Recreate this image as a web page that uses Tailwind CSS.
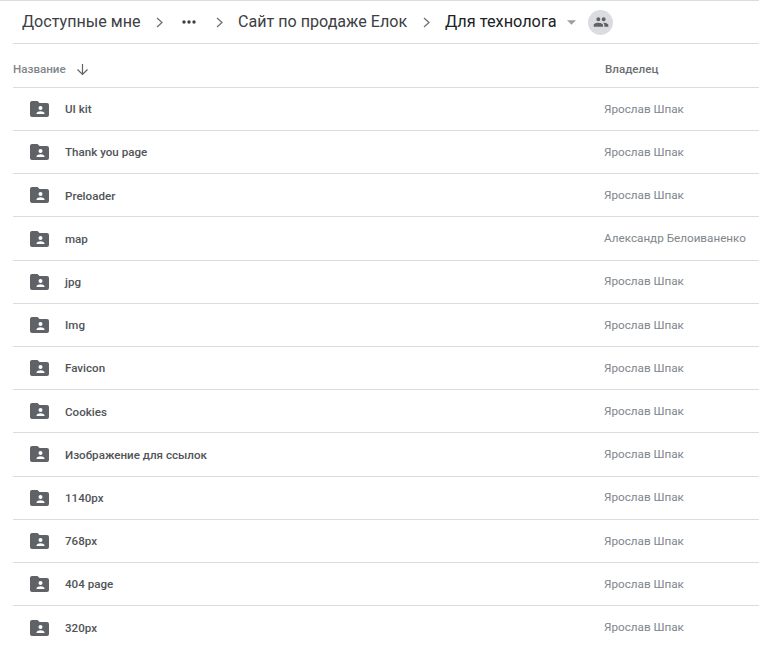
<!DOCTYPE html>
<html>
<head>
<meta charset="utf-8">
<script src="https://cdn.jsdelivr.net/npm/@tailwindcss/browser@4"></script>
</head>
<body class="bg-white overflow-hidden font-['Roboto','Liberation_Sans',sans-serif]">
<div class="w-[759px] h-[645px] overflow-hidden border-t border-[#dadce0]">
  <div class="ml-[13px] h-[42px] border-b border-[#dadce0] flex items-center text-[#5f6368] box-content">
    <span class="ml-[9px] w-[118px] text-[16.100px] text-[#3c4043] whitespace-nowrap">Доступные мне</span>
    <svg class="ml-[16px] w-[7px] h-[11px]" viewBox="0 0 7 11"><path d="M1 1 6 5.500 1 10" fill="none" stroke="#6f7377" stroke-width="1.300"/></svg>
    <svg class="ml-[19px] w-[14px] h-[4px]" viewBox="0 0 14 4"><circle cx="2" cy="2" r="1.700" fill="#3c4043"/><circle cx="7" cy="2" r="1.700" fill="#3c4043"/><circle cx="12" cy="2" r="1.700" fill="#3c4043"/></svg>
    <svg class="ml-[20px] w-[7px] h-[11px]" viewBox="0 0 7 11"><path d="M1 1 6 5.500 1 10" fill="none" stroke="#6f7377" stroke-width="1.300"/></svg>
    <span class="ml-[15px] w-[172px] text-[16.100px] text-[#3c4043] whitespace-nowrap">Сайт по продаже Елок</span>
    <svg class="ml-[13px] w-[7px] h-[11px]" viewBox="0 0 7 11"><path d="M1 1 6 5.500 1 10" fill="none" stroke="#6f7377" stroke-width="1.300"/></svg>
    <span class="ml-[15px] w-[113px] text-[16.300px] text-[#202124] whitespace-nowrap">Для технолога</span>
    <svg class="ml-[9px] w-[9px] h-[5px]" viewBox="0 0 10 5"><path d="M0 0h10L5 5z" fill="#9aa0a6"/></svg>
    <div class="ml-[12px] w-[25px] h-[25px] rounded-full bg-[#dadce0] flex items-center justify-center">
      <svg class="w-[16px] h-[16px]" viewBox="0 0 24 24"><path fill="#5f6368" d="M16 11a3 3 0 1 0 0-6 3 3 0 0 0 0 6zm-8 0a3 3 0 1 0 0-6 3 3 0 0 0 0 6zm0 2c-2.300 0-7 1.200-7 3.500V19h14v-2.500C15 14.200 10.300 13 8 13zm8 0c-.3 0-.6 0-1 .1 1.200.8 2 2 2 3.400V19h6v-2.500c0-2.300-4.700-3.500-7-3.500z"/></svg>
    </div>
  </div>
  <div class="ml-[13px] h-[43.875px] pt-[9px] border-b border-[#dadce0] flex items-center text-[11.600px] font-medium">
    <span class="w-[53px] text-[#80868b] whitespace-nowrap">Название</span>
    <svg class="ml-[10px] w-[13px] h-[13px]" viewBox="0 0 13 13"><path d="M6.500 1v10.500M1.500 6.500l5 5 5-5" fill="none" stroke="#5f6368" stroke-width="1.200"/></svg>
    <span class="ml-[516px] text-[#6b6f73] whitespace-nowrap">Владелец</span>
  </div>
  <div class="ml-[13px]">
    <div class="h-[43.2px] border-b border-[#dadce0] flex items-center">
      <svg class="ml-[17px] w-[19px] h-[16px] shrink-0" viewBox="0 0 19 16"><path fill="#5f6368" d="M2 0h5.500l2 2H17a2 2 0 0 1 2 2v10a2 2 0 0 1-2 2H2a2 2 0 0 1-2-2V2a2 2 0 0 1 2-2z"/><circle cx="10.500" cy="7" r="2" fill="#fff"/><path fill="#fff" d="M6.500 12.500c0-1.500 2.500-2.300 4-2.300s4 .8 4 2.300v.5h-8z"/></svg>
      <span class="ml-[16px] w-[539px] pt-[2px] text-[11.600px] font-medium text-[#505458] whitespace-nowrap">UI kit</span>
      <span class="pt-px text-[11.700px] text-[#80868b] whitespace-nowrap">Ярослав Шпак</span>
    </div>
    <div class="h-[43.2px] border-b border-[#dadce0] flex items-center">
      <svg class="ml-[17px] w-[19px] h-[16px] shrink-0" viewBox="0 0 19 16"><path fill="#5f6368" d="M2 0h5.500l2 2H17a2 2 0 0 1 2 2v10a2 2 0 0 1-2 2H2a2 2 0 0 1-2-2V2a2 2 0 0 1 2-2z"/><circle cx="10.500" cy="7" r="2" fill="#fff"/><path fill="#fff" d="M6.500 12.500c0-1.500 2.500-2.300 4-2.300s4 .8 4 2.300v.5h-8z"/></svg>
      <span class="ml-[16px] w-[539px] pt-[2px] text-[11.600px] font-medium text-[#505458] whitespace-nowrap">Thank you page</span>
      <span class="pt-px text-[11.700px] text-[#80868b] whitespace-nowrap">Ярослав Шпак</span>
    </div>
    <div class="h-[43.2px] border-b border-[#dadce0] flex items-center">
      <svg class="ml-[17px] w-[19px] h-[16px] shrink-0" viewBox="0 0 19 16"><path fill="#5f6368" d="M2 0h5.500l2 2H17a2 2 0 0 1 2 2v10a2 2 0 0 1-2 2H2a2 2 0 0 1-2-2V2a2 2 0 0 1 2-2z"/><circle cx="10.500" cy="7" r="2" fill="#fff"/><path fill="#fff" d="M6.500 12.500c0-1.500 2.500-2.300 4-2.300s4 .8 4 2.300v.5h-8z"/></svg>
      <span class="ml-[16px] w-[539px] pt-[2px] text-[11.600px] font-medium text-[#505458] whitespace-nowrap">Preloader</span>
      <span class="pt-px text-[11.700px] text-[#80868b] whitespace-nowrap">Ярослав Шпак</span>
    </div>
    <div class="h-[43.2px] border-b border-[#dadce0] flex items-center">
      <svg class="ml-[17px] w-[19px] h-[16px] shrink-0" viewBox="0 0 19 16"><path fill="#5f6368" d="M2 0h5.500l2 2H17a2 2 0 0 1 2 2v10a2 2 0 0 1-2 2H2a2 2 0 0 1-2-2V2a2 2 0 0 1 2-2z"/><circle cx="10.500" cy="7" r="2" fill="#fff"/><path fill="#fff" d="M6.500 12.500c0-1.500 2.500-2.300 4-2.300s4 .8 4 2.300v.5h-8z"/></svg>
      <span class="ml-[16px] w-[539px] pt-[2px] text-[11.600px] font-medium text-[#505458] whitespace-nowrap">map</span>
      <span class="pt-px text-[11.700px] text-[#80868b] whitespace-nowrap">Александр Белоиваненко</span>
    </div>
    <div class="h-[43.2px] border-b border-[#dadce0] flex items-center">
      <svg class="ml-[17px] w-[19px] h-[16px] shrink-0" viewBox="0 0 19 16"><path fill="#5f6368" d="M2 0h5.500l2 2H17a2 2 0 0 1 2 2v10a2 2 0 0 1-2 2H2a2 2 0 0 1-2-2V2a2 2 0 0 1 2-2z"/><circle cx="10.500" cy="7" r="2" fill="#fff"/><path fill="#fff" d="M6.500 12.500c0-1.500 2.500-2.300 4-2.300s4 .8 4 2.300v.5h-8z"/></svg>
      <span class="ml-[16px] w-[539px] pt-[2px] text-[11.600px] font-medium text-[#505458] whitespace-nowrap">jpg</span>
      <span class="pt-px text-[11.700px] text-[#80868b] whitespace-nowrap">Ярослав Шпак</span>
    </div>
    <div class="h-[43.2px] border-b border-[#dadce0] flex items-center">
      <svg class="ml-[17px] w-[19px] h-[16px] shrink-0" viewBox="0 0 19 16"><path fill="#5f6368" d="M2 0h5.500l2 2H17a2 2 0 0 1 2 2v10a2 2 0 0 1-2 2H2a2 2 0 0 1-2-2V2a2 2 0 0 1 2-2z"/><circle cx="10.500" cy="7" r="2" fill="#fff"/><path fill="#fff" d="M6.500 12.500c0-1.500 2.500-2.300 4-2.300s4 .8 4 2.300v.5h-8z"/></svg>
      <span class="ml-[16px] w-[539px] pt-[2px] text-[11.600px] font-medium text-[#505458] whitespace-nowrap">Img</span>
      <span class="pt-px text-[11.700px] text-[#80868b] whitespace-nowrap">Ярослав Шпак</span>
    </div>
    <div class="h-[43.2px] border-b border-[#dadce0] flex items-center">
      <svg class="ml-[17px] w-[19px] h-[16px] shrink-0" viewBox="0 0 19 16"><path fill="#5f6368" d="M2 0h5.500l2 2H17a2 2 0 0 1 2 2v10a2 2 0 0 1-2 2H2a2 2 0 0 1-2-2V2a2 2 0 0 1 2-2z"/><circle cx="10.500" cy="7" r="2" fill="#fff"/><path fill="#fff" d="M6.500 12.500c0-1.500 2.500-2.300 4-2.300s4 .8 4 2.300v.5h-8z"/></svg>
      <span class="ml-[16px] w-[539px] pt-[2px] text-[11.600px] font-medium text-[#505458] whitespace-nowrap">Favicon</span>
      <span class="pt-px text-[11.700px] text-[#80868b] whitespace-nowrap">Ярослав Шпак</span>
    </div>
    <div class="h-[43.2px] border-b border-[#dadce0] flex items-center">
      <svg class="ml-[17px] w-[19px] h-[16px] shrink-0" viewBox="0 0 19 16"><path fill="#5f6368" d="M2 0h5.500l2 2H17a2 2 0 0 1 2 2v10a2 2 0 0 1-2 2H2a2 2 0 0 1-2-2V2a2 2 0 0 1 2-2z"/><circle cx="10.500" cy="7" r="2" fill="#fff"/><path fill="#fff" d="M6.500 12.500c0-1.500 2.500-2.300 4-2.300s4 .8 4 2.300v.5h-8z"/></svg>
      <span class="ml-[16px] w-[539px] pt-[2px] text-[11.600px] font-medium text-[#505458] whitespace-nowrap">Cookies</span>
      <span class="pt-px text-[11.700px] text-[#80868b] whitespace-nowrap">Ярослав Шпак</span>
    </div>
    <div class="h-[43.2px] border-b border-[#dadce0] flex items-center">
      <svg class="ml-[17px] w-[19px] h-[16px] shrink-0" viewBox="0 0 19 16"><path fill="#5f6368" d="M2 0h5.500l2 2H17a2 2 0 0 1 2 2v10a2 2 0 0 1-2 2H2a2 2 0 0 1-2-2V2a2 2 0 0 1 2-2z"/><circle cx="10.500" cy="7" r="2" fill="#fff"/><path fill="#fff" d="M6.500 12.500c0-1.500 2.500-2.300 4-2.300s4 .8 4 2.300v.5h-8z"/></svg>
      <span class="ml-[16px] w-[539px] pt-[2px] text-[11.600px] font-medium text-[#505458] whitespace-nowrap">Изображение для ссылок</span>
      <span class="pt-px text-[11.700px] text-[#80868b] whitespace-nowrap">Ярослав Шпак</span>
    </div>
    <div class="h-[43.2px] border-b border-[#dadce0] flex items-center">
      <svg class="ml-[17px] w-[19px] h-[16px] shrink-0" viewBox="0 0 19 16"><path fill="#5f6368" d="M2 0h5.500l2 2H17a2 2 0 0 1 2 2v10a2 2 0 0 1-2 2H2a2 2 0 0 1-2-2V2a2 2 0 0 1 2-2z"/><circle cx="10.500" cy="7" r="2" fill="#fff"/><path fill="#fff" d="M6.500 12.500c0-1.500 2.500-2.300 4-2.300s4 .8 4 2.300v.5h-8z"/></svg>
      <span class="ml-[16px] w-[539px] pt-[2px] text-[11.600px] font-medium text-[#505458] whitespace-nowrap">1140px</span>
      <span class="pt-px text-[11.700px] text-[#80868b] whitespace-nowrap">Ярослав Шпак</span>
    </div>
    <div class="h-[43.2px] border-b border-[#dadce0] flex items-center">
      <svg class="ml-[17px] w-[19px] h-[16px] shrink-0" viewBox="0 0 19 16"><path fill="#5f6368" d="M2 0h5.500l2 2H17a2 2 0 0 1 2 2v10a2 2 0 0 1-2 2H2a2 2 0 0 1-2-2V2a2 2 0 0 1 2-2z"/><circle cx="10.500" cy="7" r="2" fill="#fff"/><path fill="#fff" d="M6.500 12.500c0-1.500 2.500-2.300 4-2.300s4 .8 4 2.300v.5h-8z"/></svg>
      <span class="ml-[16px] w-[539px] pt-[2px] text-[11.600px] font-medium text-[#505458] whitespace-nowrap">768px</span>
      <span class="pt-px text-[11.700px] text-[#80868b] whitespace-nowrap">Ярослав Шпак</span>
    </div>
    <div class="h-[43.2px] border-b border-[#dadce0] flex items-center">
      <svg class="ml-[17px] w-[19px] h-[16px] shrink-0" viewBox="0 0 19 16"><path fill="#5f6368" d="M2 0h5.500l2 2H17a2 2 0 0 1 2 2v10a2 2 0 0 1-2 2H2a2 2 0 0 1-2-2V2a2 2 0 0 1 2-2z"/><circle cx="10.500" cy="7" r="2" fill="#fff"/><path fill="#fff" d="M6.500 12.500c0-1.500 2.500-2.300 4-2.300s4 .8 4 2.300v.5h-8z"/></svg>
      <span class="ml-[16px] w-[539px] pt-[2px] text-[11.600px] font-medium text-[#505458] whitespace-nowrap">404 page</span>
      <span class="pt-px text-[11.700px] text-[#80868b] whitespace-nowrap">Ярослав Шпак</span>
    </div>
    <div class="h-[43.2px] flex items-center">
      <svg class="ml-[17px] w-[19px] h-[16px] shrink-0" viewBox="0 0 19 16"><path fill="#5f6368" d="M2 0h5.500l2 2H17a2 2 0 0 1 2 2v10a2 2 0 0 1-2 2H2a2 2 0 0 1-2-2V2a2 2 0 0 1 2-2z"/><circle cx="10.500" cy="7" r="2" fill="#fff"/><path fill="#fff" d="M6.500 12.500c0-1.500 2.500-2.300 4-2.300s4 .8 4 2.300v.5h-8z"/></svg>
      <span class="ml-[16px] w-[539px] pt-[2px] text-[11.600px] font-medium text-[#505458] whitespace-nowrap">320px</span>
      <span class="pt-px text-[11.700px] text-[#80868b] whitespace-nowrap">Ярослав Шпак</span>
    </div>
  </div>
</div>
</body>
</html>
